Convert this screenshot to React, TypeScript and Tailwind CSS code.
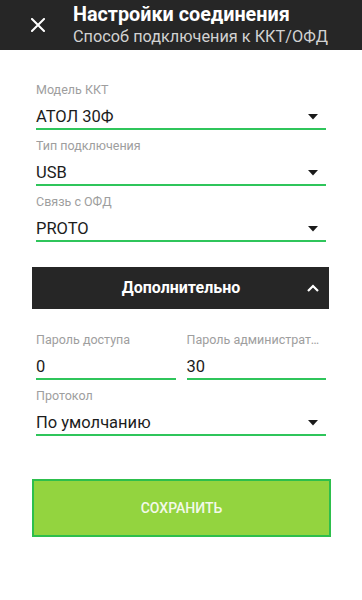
import React from "react";

const font = { fontFamily: "Roboto, 'Noto Sans', sans-serif" };

function Caret() {
  return (
    <svg width="10" height="6" viewBox="0 0 10 6" className="shrink-0 mr-[8px]">
      <path d="M0 0 L10 0 L5 5.5 Z" fill="#1a1a1a" />
    </svg>
  );
}

function Field({ label, value, select = true }: { label: string; value: string; select?: boolean }) {
  return (
    <div className="flex flex-col mb-[8px] min-w-0">
      <div className="h-[16px] text-[12.5px] leading-[16px] text-[#9e9e9e] truncate">{label}</div>
      <div className="mt-[8px] h-[22px] flex items-center justify-between">
        <span className="text-[16.5px] leading-[22px] text-[#1c1c1c]">{value}</span>
        {select && <Caret />}
      </div>
      <div className="h-[2px] bg-[#2fc55b]" />
    </div>
  );
}

export default function App() {
  return (
    <div className="w-[362px] h-[600px] bg-white" style={font}>
      {/* top bar */}
      <div className="h-[50px] bg-[#262626] flex items-center">
        <div className="w-[73px] flex justify-center pl-[2px]">
          <svg width="14" height="14" viewBox="0 0 14 14">
            <path d="M1 1 L13 13 M13 1 L1 13" stroke="#ffffff" strokeWidth="2" strokeLinecap="square" />
          </svg>
        </div>
        <div className="flex flex-col -mt-[1px]">
          <span className="text-[19.8px] leading-[23px] font-bold text-white">Настройки соединения</span>
          <span className="text-[16.3px] leading-[21px] text-[#d2d2d2]">Способ подключения к ККТ/ОФД</span>
        </div>
      </div>

      <div className="pt-[32px] pl-[32px] pr-[33px]">
        <div className="px-[4px] pr-[3px]">
          <Field label="Модель ККТ" value="АТОЛ 30Ф" />
          <Field label="Тип подключения" value="USB" />
          <Field label="Связь с ОФД" value="PROTO" />
        </div>

        <div className="mt-[25px] h-[42px] bg-[#262626] flex items-center relative">
          <span className="flex-1 text-center text-[16px] font-bold text-white pl-[1px]">Дополнительно</span>
          <svg width="12" height="8" viewBox="0 0 12 8" className="absolute right-[10px] top-[17px]">
            <path d="M1 7 L6 2 L11 7" stroke="#ffffff" strokeWidth="2.2" fill="none" />
          </svg>
        </div>

        <div className="mt-[23px] px-[4px] pr-[3px]">
          <div className="grid grid-cols-2 gap-[11px]">
            <Field label="Пароль доступа" value="0" select={false} />
            <Field label="Пароль администратора" value="30" select={false} />
          </div>
          <Field label="Протокол" value="По умолчанию" />
        </div>

        <button className="mt-[35px] w-[299px] h-[58px] bg-[#93d43f] border-2 border-[#2dbf4c] text-[#f3f9ea] text-[14px] font-medium">
          СОХРАНИТЬ
        </button>
      </div>
    </div>
  );
}
